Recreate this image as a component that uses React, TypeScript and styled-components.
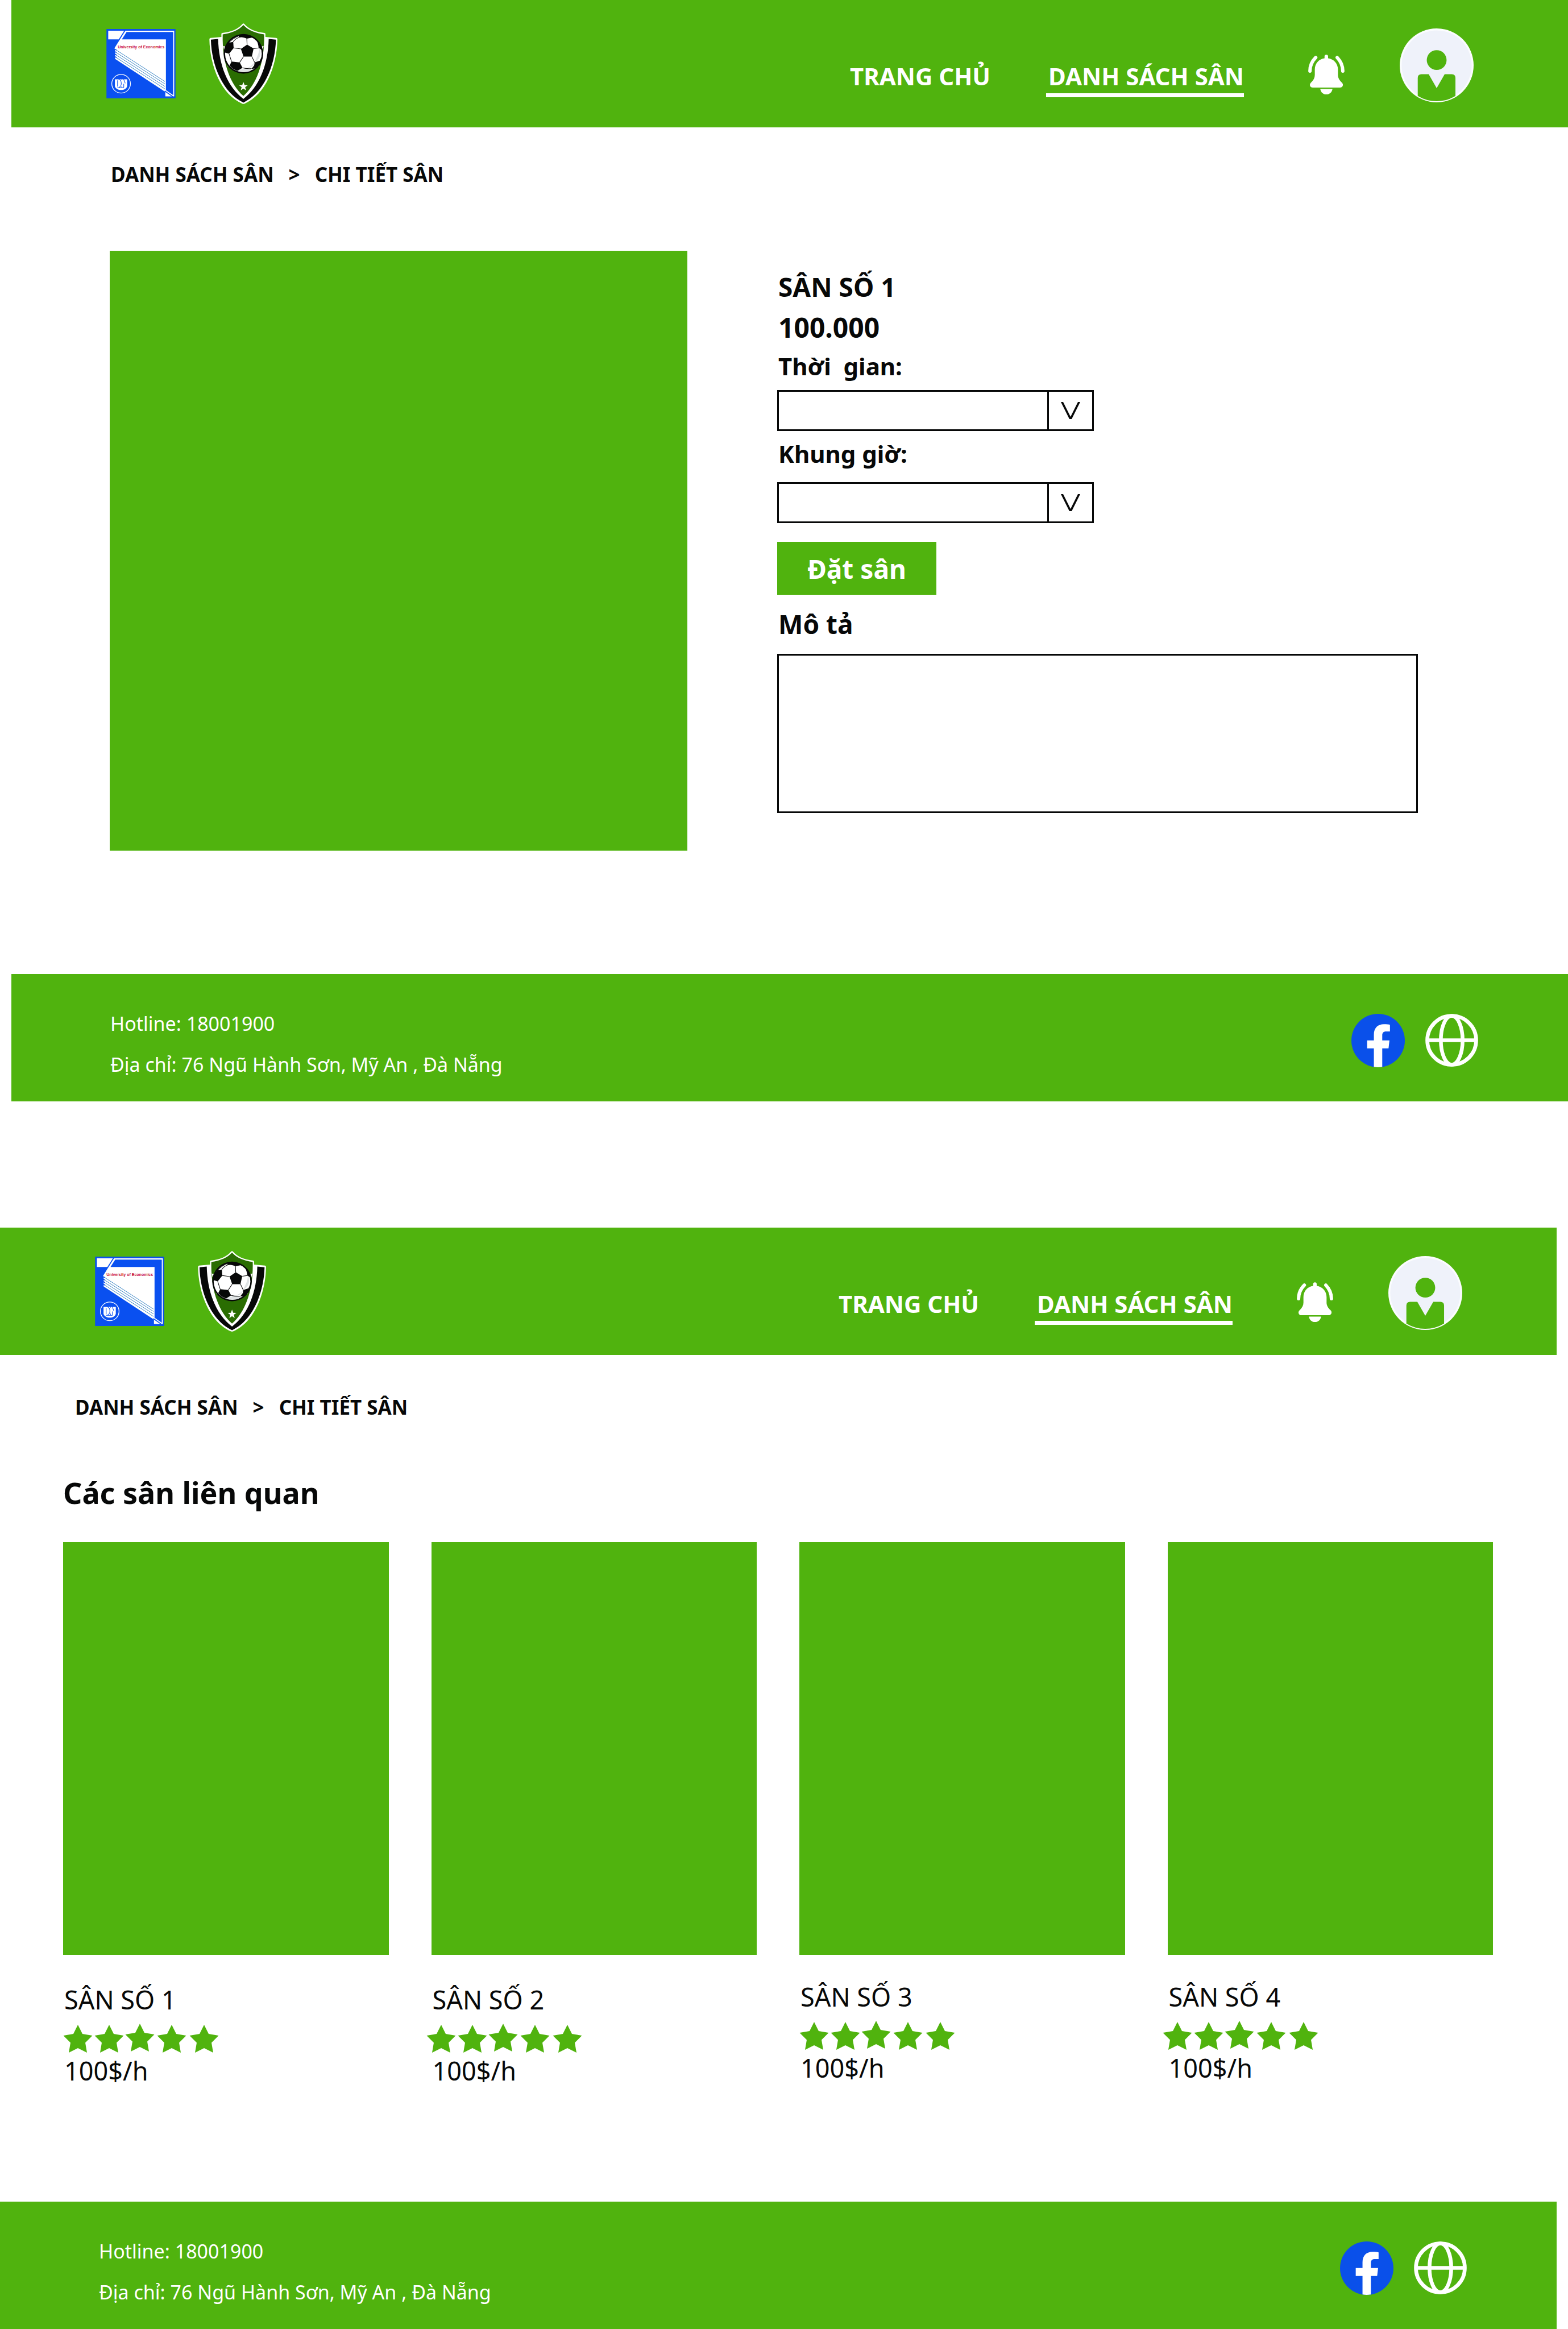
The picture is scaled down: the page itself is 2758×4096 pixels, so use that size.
import React from "react";
import styled, { createGlobalStyle } from "styled-components";

const color = {
  green: "#50b30e",
  darkGreen: "#2a6d02",
  blue: "#0a50ea",
  ink: "#070808",
  white: "#ffffff",
};

const GlobalStyle = createGlobalStyle`
  *, *::before, *::after { box-sizing: border-box; }
  body {
    margin: 0;
    background: ${color.white};
    color: ${color.ink};
    font-family: "Noto Sans", "Open Sans", sans-serif;
  }
  h1, h2, h3, p { margin: 0; }
  a { color: inherit; text-decoration: none; }
  button, select, textarea { font: inherit; color: inherit; }
`;

const Screens = styled.div`
  display: flex;
  flex-direction: column;
  gap: 222px;
`;

const Screen = styled.section<{ $side: "left" | "right" }>`
  margin-${(p) => p.$side}: 20px;
`;

const HeaderBar = styled.header`
  display: flex;
  align-items: center;
  height: 224px;
  padding: 0 166px 0 167px;
  background: ${color.green};
  color: ${color.white};
`;

const Brand = styled.div`
  display: flex;
  align-items: center;
  gap: 59px;
  margin-right: auto;
`;

const Nav = styled.nav`
  display: flex;
  gap: 98px;
  padding-top: 52px;
`;

const NavLink = styled.a<{ $active?: boolean }>`
  padding: 0 0 2px 4px;
  border-bottom: 7px solid ${(p) => (p.$active ? color.white : "transparent")};
  font-size: 42px;
  font-weight: 700;
  line-height: 56px;
  white-space: nowrap;
`;

const IconButton = styled.button<{ $gap: number }>`
  display: flex;
  margin: 0 0 0 ${(p) => p.$gap}px;
  padding: 0;
  border: 0;
  background: none;
  cursor: pointer;
`;

const BellButton = styled(IconButton)`
  padding-top: 38px;
`;

const AvatarButton = styled(IconButton)`
  padding-top: 6px;
`;

const Crumbs = styled.nav<{ $top: number; $left: number }>`
  display: flex;
  gap: 26px;
  padding: ${(p) => p.$top}px ${(p) => p.$left}px 0;
  font-size: 35px;
  font-weight: 700;
  line-height: 48px;
`;

const Detail = styled.main`
  display: grid;
  grid-template-columns: 1016fr 1127fr;
  gap: 158px;
  padding: 110px 264px 217px 173px;
`;

const FieldImage = styled.div`
  height: 1055px;
  background: ${color.green};
`;

const Info = styled.form`
  display: flex;
  flex-direction: column;
  align-items: flex-start;
  padding-top: 31px;
`;

const FieldName = styled.h1`
  padding-left: 2px;
  font-size: 46px;
  font-weight: 700;
  line-height: 64px;
`;

const Price = styled.p`
  margin-top: 8px;
  padding-left: 2px;
  font-size: 48px;
  font-weight: 700;
  line-height: 64px;
`;

const Label = styled.label<{ $gap: number }>`
  margin-top: ${(p) => p.$gap}px;
  padding-left: 2px;
  font-size: 42px;
  font-weight: 700;
  line-height: 56px;
  white-space: pre;
`;

const SelectBox = styled.div<{ $gap: number }>`
  display: grid;
  grid-template-columns: 1fr 79px;
  width: 557px;
  height: 72px;
  margin-top: ${(p) => p.$gap}px;
  border: 3px solid ${color.ink};
`;

const Select = styled.select`
  grid-area: 1 / 1 / 2 / 3;
  width: 100%;
  padding: 0 96px 0 16px;
  border: 0;
  border-radius: 0;
  background: transparent;
  font-size: 34px;
  appearance: none;
`;

const SelectArrow = styled.span`
  grid-area: 1 / 2 / 2 / 3;
  display: grid;
  place-items: center;
  border-left: 3px solid ${color.ink};
  pointer-events: none;
`;

const BookButton = styled.button`
  width: 280px;
  height: 93px;
  margin: 33px 0 0;
  padding: 0;
  border: 0;
  background: ${color.green};
  color: ${color.white};
  font-size: 46px;
  font-weight: 700;
  line-height: 64px;
  cursor: pointer;
`;

const DescriptionLabel = styled.label`
  margin-top: 19px;
  padding-left: 2px;
  font-size: 46px;
  font-weight: 700;
  line-height: 64px;
`;

const Description = styled.textarea`
  width: 100%;
  height: 280px;
  margin: 21px 0 0;
  padding: 16px;
  border: 3px solid ${color.ink};
  border-radius: 0;
  background: transparent;
  font-size: 34px;
  resize: none;
`;

const Related = styled.main`
  padding: 90px 112px 200px 111px;
`;

const RelatedTitle = styled.h2`
  font-size: 52px;
  font-weight: 700;
  line-height: 72px;
`;

const Stars = styled.svg`
  display: block;
  margin: 12px 0 2px;
`;

const Cards = styled.div`
  display: grid;
  grid-template-columns: repeat(4, 1fr);
  gap: 75px;
  margin-top: 51px;
`;

const Card = styled.article`
  font-size: 45px;
  line-height: 60px;

  &:nth-child(even) ${Stars} {
    margin-left: -9px;
  }
`;

const CardImage = styled.div`
  height: 726px;
  background: ${color.green};
`;

const CardBody = styled.div<{ $raised?: boolean }>`
  padding-top: ${(p) => (p.$raised ? 44 : 49)}px;
`;

const CardTitle = styled.h3`
  padding-left: 2px;
  font-size: 45px;
  font-weight: 400;
`;

const CardPrice = styled.p`
  padding-left: 2px;
`;

const FooterBar = styled.footer`
  display: flex;
  justify-content: space-between;
  height: 224px;
  padding: 51px 158px 0 171px;
  background: ${color.green};
  color: ${color.white};
  font-size: 34px;
  line-height: 72px;
`;

const Contact = styled.address`
  padding-left: 3px;
  font-style: normal;
`;

const Social = styled.div`
  display: flex;
  align-items: flex-start;
  gap: 36px;
  padding-top: 19px;
`;

const SocialLink = styled.a`
  display: flex;
`;

function UniversityLogo() {
  return (
    <svg width="122" height="122" viewBox="30 75 467 469" role="img" aria-label="University of Economics">
      <rect x="30" y="75" width="467" height="469" fill="#0a50f0" />
      <path d="M42 87H150L113 145H42Z" fill="#fff" />
      <path
        d="M158 87H488V531H474L88 277V212L84 205ZM166 95L134 145H432V488L481 522V95Z"
        fill="#fff"
        fillRule="evenodd"
      />
      <path d="M428 497L476 531H428Z" fill="#fff" />
      <path d="M424 494L478 532" stroke="#0a50f0" strokeWidth="6" />
      <g stroke="#2678bd" strokeWidth="3.5">
        <path d="M88 212L425 430" />
        <path d="M88 229L425 446" />
        <path d="M88 246L425 463" />
        <path d="M88 263L425 480" />
      </g>
      <g stroke="#0a50f0" strokeWidth="6">
        <path d="M84 211L98 217M84 227L98 234M84 243L98 251M84 260L98 268" />
      </g>
      <text
        x="107"
        y="205"
        fill="#c8103c"
        fontFamily="'Liberation Sans', sans-serif"
        fontWeight="700"
        fontSize="27"
      >
        University of Economics
      </text>
      <circle cx="129" cy="445" r="63" fill="none" stroke="#fff" strokeWidth="5" />
      <path d="M87 415H170V462C160 496 98 496 87 462Z" fill="#fff" />
      <g fill="none" stroke="#0a50f0" strokeWidth="4">
        <path d="M105 422V464M112 414C136 420 136 462 114 470" />
        <path d="M134 414V420M134 460V470M146 414L157 442M147 470V446" />
        <path d="M104 472H148" />
      </g>
    </svg>
  );
}

function ShieldLogo() {
  return (
    <svg width="120" height="142" viewBox="34 37 461 546" role="img" aria-label="Football club">
      <path
        d="M259 41Q265 35 271 41C300 76 345 96 408 102Q414 103 414 109V129L488 136Q495 137 495 145C492 330 412 522 272 581Q265 584 258 581C118 522 38 330 35 145Q35 137 42 136L116 129V109Q116 103 122 102C185 96 230 76 259 41Z"
        fill="#fff"
      />
      <path
        d="M45 148L94 143C98 320 160 470 265 548C370 470 432 320 436 143L485 148C480 330 400 510 265 573C130 510 50 330 45 148Z"
        fill="#070808"
      />
      <path
        d="M125 112C185 104 235 82 265 49C295 82 345 104 405 112C410 310 350 455 265 528C180 455 120 310 125 112Z"
        fill={color.darkGreen}
      />
      <path d="M128 190L160 330L172 320V200ZM402 190L370 330L358 320V200Z" fill="#fff" />
      <circle cx="265" cy="243" r="134" fill="#070808" />
      <circle cx="265" cy="243" r="124" fill="#fff" />
      <path
        d="M372 205C390 235 380 280 342 298C352 270 370 250 372 205ZM338 302C335 330 300 345 276 342C305 335 320 325 338 302ZM224 360C250 342 290 342 318 346L312 360C285 370 250 370 224 360Z"
        fill="#dfe3e4"
      />
      <g fill="#070808">
        <path d="M290 181L334 207L322 262H266L248 210Z" />
        <path d="M196 163L199 204L168 243L141 235C140 205 150 185 166 168Z" />
        <path d="M232 117C265 108 310 116 330 132L288 141C270 131 252 129 234 133Z" />
        <path d="M185 296L240 301L259 338L226 358C200 352 182 336 172 322Z" />
        <path d="M341 301L376 290L392 255C390 310 360 345 320 345L338 322Z" />
        <path d="M352 147C380 165 393 195 394 222L368 202C366 182 361 165 352 147Z" />
      </g>
      <path
        d="M288 140L290 182M334 208L370 203M322 262L341 301M266 262L240 301M248 210L199 203M168 243L185 296M259 338Q290 346 320 343M196 163Q208 142 234 133M160 175Q190 140 230 124"
        fill="none"
        stroke="#070808"
        strokeWidth="4"
      />
      <path
        d="M265 434L273 455L294 456L277 469L283 491L265 478L247 491L253 469L236 456L257 455Z"
        fill="#fff"
      />
    </svg>
  );
}

function BellIcon() {
  return (
    <svg width="64" height="70" viewBox="144 247 247 270" aria-hidden="true">
      <path
        d="M255 272V260A12 12 0 0 1 279 260V272C318 277 346 308 346 348V385C346 405 356 422 374 438C386 452 378 471 360 471H175C157 471 149 452 162 438C180 422 189 405 189 385V348C189 308 216 277 255 272Z"
        fill="#fff"
      />
      <path d="M226 480H309C305 503 289 517 267 517S230 503 226 480Z" fill="#fff" />
      <path
        d="M195 267C170 292 156 322 156 359M341 267C365 292 379 322 379 359"
        fill="none"
        stroke="#fff"
        strokeWidth="23"
        strokeLinecap="round"
      />
    </svg>
  );
}

function AvatarIcon() {
  return (
    <svg width="130" height="130" viewBox="766 71 500 500" aria-hidden="true">
      <circle cx="1016" cy="321" r="250" fill="#fbfcfe" />
      <circle cx="1016" cy="321" r="237" fill="#eff2fa" />
      <circle cx="1016" cy="285" r="67" fill={color.green} />
      <path
        d="M888 528V406Q888 381 913 381H962L1016 475L1070 381H1118Q1143 381 1143 406V528A246 246 0 0 1 888 528Z"
        fill={color.green}
      />
    </svg>
  );
}

function FacebookIcon() {
  return (
    <svg width="94" height="94" viewBox="0 0 120 120" aria-hidden="true">
      <circle cx="60" cy="60" r="60" fill={color.blue} />
      <path
        d="M50.500 119.200V77.400H35.300V59.700H50.500V47C50.500 31 60 23.400 73 23.400C79 23.400 84 24 86.600 24.500V39.700H78C72 39.700 69.300 43 69.300 48V59.700H85.500L83.400 77.400H69.300V119.200Q60 120.800 50.500 119.200Z"
        fill="#fff"
      />
    </svg>
  );
}

function GlobeIcon() {
  return (
    <svg width="93" height="93" viewBox="0 0 120 120" fill="none" stroke="#fff" strokeWidth="8.500" aria-hidden="true">
      <circle cx="60" cy="60" r="55.500" />
      <ellipse cx="60" cy="60" rx="24.700" ry="55.500" />
      <path d="M5 60H115" />
    </svg>
  );
}

function ArrowIcon() {
  return (
    <svg width="34" height="30" viewBox="0 0 34 30" aria-hidden="true">
      <path d="M0 0H4L17 26L30 0H34L19 30H15Z" fill={color.ink} />
    </svg>
  );
}

const starCentres = [26, 81, 135, 191, 248];
const middleStar = 2;

function Rating() {
  return (
    <Stars width="274" height="51" viewBox="0 0 274 51" role="img" aria-label="5/5">
      {starCentres.map((x, i) => (
        <path
          key={x}
          transform={`translate(${x} ${i === middleStar ? 0 : 2})`}
          d="M0 0L8 16L25.500 19L13 31.500L16 49L0 41L-16 49L-13 31.500L-25.500 19L-8 16Z"
          fill={color.green}
        />
      ))}
    </Stars>
  );
}

function Header() {
  return (
    <HeaderBar>
      <Brand>
        <UniversityLogo />
        <ShieldLogo />
      </Brand>
      <Nav>
        <NavLink href="#">TRANG CHỦ</NavLink>
        <NavLink href="#" $active aria-current="page">
          DANH SÁCH SÂN
        </NavLink>
      </Nav>
      <BellButton type="button" $gap={113} aria-label="Thông báo">
        <BellIcon />
      </BellButton>
      <AvatarButton type="button" $gap={97} aria-label="Tài khoản">
        <AvatarIcon />
      </AvatarButton>
    </HeaderBar>
  );
}

function Breadcrumb({ top, left }: { top: number; left: number }) {
  return (
    <Crumbs $top={top} $left={left}>
      <a href="#">DANH SÁCH SÂN</a>
      <span>&gt;</span>
      <a href="#">CHI TIẾT SÂN</a>
    </Crumbs>
  );
}

function Footer() {
  return (
    <FooterBar>
      <Contact>
        <p>Hotline: 18001900</p>
        <p>Địa chỉ: 76 Ngũ Hành Sơn, Mỹ An , Đà Nẵng</p>
      </Contact>
      <Social>
        <SocialLink href="#" aria-label="Facebook">
          <FacebookIcon />
        </SocialLink>
        <SocialLink href="#" aria-label="Website">
          <GlobeIcon />
        </SocialLink>
      </Social>
    </FooterBar>
  );
}

function Dropdown({ id, gap }: { id: string; gap: number }) {
  return (
    <SelectBox $gap={gap}>
      <Select id={id} defaultValue="">
        <option value="" />
      </Select>
      <SelectArrow>
        <ArrowIcon />
      </SelectArrow>
    </SelectBox>
  );
}

const relatedFields = [
  { name: "SÂN SỐ 1", price: "100$/h" },
  { name: "SÂN SỐ 2", price: "100$/h" },
  { name: "SÂN SỐ 3", price: "100$/h", raised: true },
  { name: "SÂN SỐ 4", price: "100$/h", raised: true },
];

export default function App() {
  return (
    <>
      <GlobalStyle />
      <Screens>
        <Screen $side="left">
          <Header />
          <Breadcrumb top={59} left={175} />
          <Detail>
            <FieldImage />
            <Info>
              <FieldName>SÂN SỐ 1</FieldName>
              <Price>100.000</Price>
              <Label htmlFor="date" $gap={8}>
                {"Thời  gian:"}
              </Label>
              <Dropdown id="date" gap={14} />
              <Label htmlFor="slot" $gap={12}>
                Khung giờ:
              </Label>
              <Dropdown id="slot" gap={22} />
              <BookButton type="button">Đặt sân</BookButton>
              <DescriptionLabel htmlFor="description">Mô tả</DescriptionLabel>
              <Description id="description" />
            </Info>
          </Detail>
          <Footer />
        </Screen>

        <Screen $side="right">
          <Header />
          <Breadcrumb top={68} left={132} />
          <Related>
            <RelatedTitle>Các sân liên quan</RelatedTitle>
            <Cards>
              {relatedFields.map((field) => (
                <Card key={field.name}>
                  <CardImage />
                  <CardBody $raised={field.raised}>
                    <CardTitle>{field.name}</CardTitle>
                    <Rating />
                    <CardPrice>{field.price}</CardPrice>
                  </CardBody>
                </Card>
              ))}
            </Cards>
          </Related>
          <Footer />
        </Screen>
      </Screens>
    </>
  );
}
